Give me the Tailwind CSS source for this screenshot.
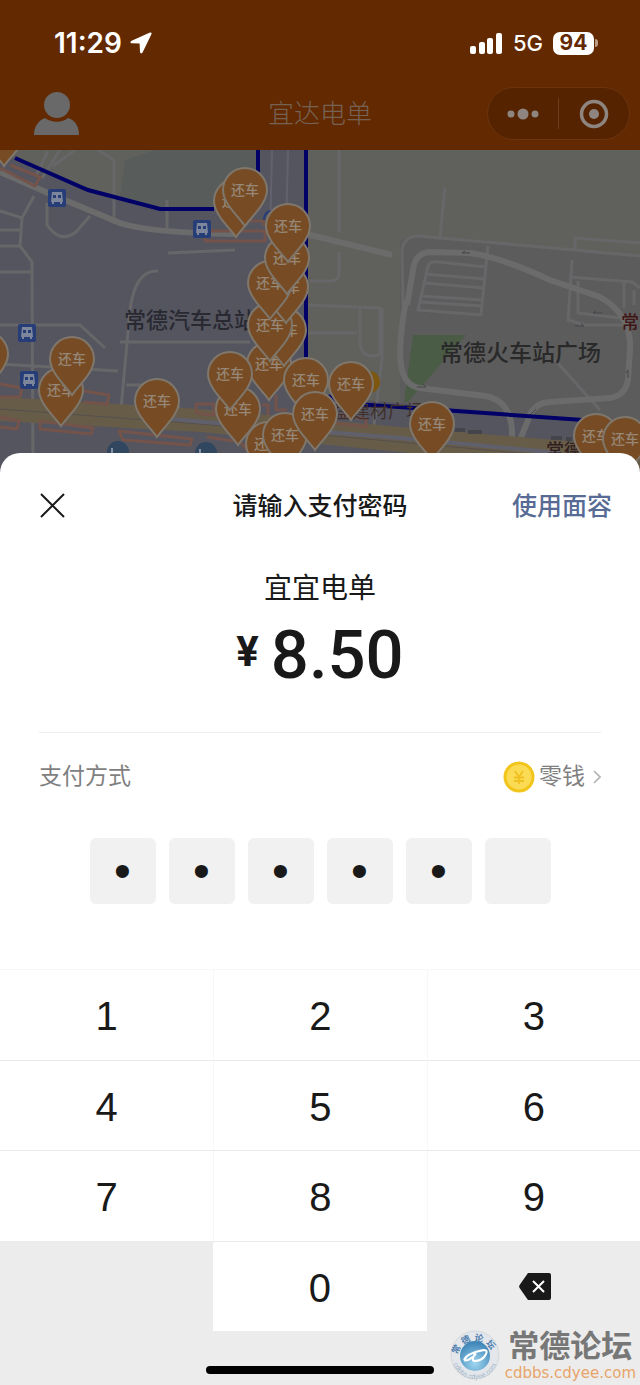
<!DOCTYPE html>
<html lang="zh-CN">
<head>
  <meta charset="UTF-8" />
  <meta name="viewport" content="width=device-width, initial-scale=1.0" />
  <title>请输入支付密码</title>
  <script src="https://cdn.jsdelivr.net/npm/@tailwindcss/browser@4"></script>
</head>
<body class="bg-[#ececec] font-['Liberation_Sans','Noto_Sans_CJK_SC',sans-serif] text-[#191919]">
  <div class="relative flex flex-col min-h-screen overflow-hidden">

    <!-- Dimmed mini program header -->
    <header class="bg-[#632900]">
      <div class="flex items-center justify-between h-[86px] pl-[54px] pr-[42px] text-white font-['Inter',sans-serif]">
        <div class="flex items-center gap-2">
          <span class="text-[28px] font-semibold">11:29</span>
          <svg class="w-[22px] h-[22px]" viewBox="0 0 22 22" fill="#fff"><path d="M20 0.6 1.6 8.8C-0.2 9.7 0.2 11.2 1.8 11.3L9.6 11.6 10 19.8C10.1 21.6 11.9 22 12.7 20.3L21.4 2.2C22 0.9 21.2 0.1 20 0.6Z"/></svg>
        </div>
        <div class="flex items-center gap-[10px]">
          <svg class="w-[33px] h-[21px]" viewBox="0 0 33 21" fill="#fff">
            <rect x="0" y="13" width="6" height="8" rx="2"/>
            <rect x="9" y="9" width="6" height="12" rx="2"/>
            <rect x="17" y="5" width="6" height="16" rx="2"/>
            <rect x="26" y="0" width="6" height="21" rx="2"/>
          </svg>
          <span class="text-[22px] font-medium">5G</span>
          <div class="flex items-center gap-px">
            <span class="flex items-center justify-center w-[41px] h-[23px] rounded-[7px] bg-white text-[#632900] text-[21px] font-bold">94</span>
            <span class="w-[3px] h-[8px] rounded-r-full bg-[#b79c88]"></span>
          </div>
        </div>
      </div>
      <div class="grid grid-cols-3 items-start h-16 pl-[34px] pr-[10px]">
        <button aria-label="我的" class="w-[46px] pt-[6px]">
          <svg class="w-[46px] h-[43px]" viewBox="0 0 46 43" fill="#696969"><circle cx="23" cy="13" r="13"/><path d="M0 43C0 34 5 28 11 26 18 31 28 31 34 26 41 28 45 34 45 43Z"/></svg>
        </button>
        <h1 class="pr-6 pt-2 text-[26px] leading-[40px] text-center font-light text-[#766255] whitespace-nowrap">宜达电单</h1>
        <div class="justify-self-end flex items-center w-[143px] h-[53px] mt-px rounded-full border border-[#6c3510] bg-[#552300]">
          <button aria-label="更多" class="flex-1 flex justify-center">
            <svg class="w-8 h-3" viewBox="0 0 32 12" fill="#8f8580"><circle cx="4" cy="6" r="3.5"/><circle cx="16" cy="6" r="5.5"/><circle cx="28" cy="6" r="3.5"/></svg>
          </button>
          <span class="w-px h-[31px] bg-[#6c3c1c]"></span>
          <button aria-label="关闭小程序" class="flex-1 flex justify-center">
            <svg class="w-[30px] h-[30px]" viewBox="0 0 30 30"><circle cx="15" cy="15" r="12.5" fill="none" stroke="#8f8580" stroke-width="3.5"/><circle cx="15" cy="15" r="5" fill="#8f8580"/></svg>
          </button>
        </div>
      </div>
    </header>

    <!-- Map behind the sheet, y runs on from the header -->
    <svg class="block w-full h-[323px] shrink-0" viewBox="0 150 640 323" preserveAspectRatio="xMidYMin slice" role="img" aria-label="还车点地图">
      <defs>
        <g id="pin">
          <path d="M0 36C-5 28-22 14-22 0A22 22 0 0 1 22 0C22 14 5 28 0 36Z" fill="#774c24" stroke="#7f776c" stroke-width="2"/>
          <text y="5" text-anchor="middle" font-size="14" font-weight="500" fill="#968777">还车</text>
        </g>
        <g id="bus">
          <rect x="-9" y="-9" width="18" height="18" rx="2" fill="#273d78"/>
          <path d="M-5-6H5L6 4H-6Z" fill="#7e869c"/>
          <path d="M-4-3H-1V0H-4ZM1-3H4V0H1Z" fill="#273d78"/>
          <path d="M-4 4V6M4 4V6" stroke="#7e869c" stroke-width="2"/>
        </g>
      </defs>
      <rect y="150" width="640" height="330" fill="#60605c"/>
      <path d="M155 150H258V209H160L120 196 125 160Z" fill="#585d5c"/>
      <path d="M400 480V245Q402 236 415 236L640 256V480Z" fill="#5c5c5c"/>
      <path d="M0 150 15 158 88 190 160 209H258V150H306V395L640 424V480H0Z" fill="#555560"/>
      <path d="M413 335H466L408 402H404Z" fill="#4a5c45"/>

      <!-- Minor roads -->
      <g fill="none" stroke="#676769" stroke-width="3">
        <path d="M98 150 114 160V224M48 151 36 176M60 150 42 178M34 196 22 218 0 211M22 218 20 246 32 262 33 480M0 230H20M0 246H20M0 272H32M47 203V225Q60 244 76 232L90 216M167 200V230M168 253 235 250M158 271Q135 270 130 310L120 420M0 325H80L105 348M0 364 118 371M120 342H250M126 385H165L180 410M75 150 53 166"/>
        <path d="M339 150V232M339 252V275Q338 281 330 281H310M445 187 440 238M308 305 380 308V355Q360 360 360 340V308M308 333H357M382 308V358L374 425"/>
        <path d="M403 305 402 250Q404 236 418 236L640 256M575 252V238L640 243M488 246 481 315 418 310 428 266Q430 261 438 262L486 267M425 274 484 279M425 283 484 288M421 296 483 300M420 302 482 306M572 260 568 320 585 325H626M570 277 632 282 640 288M578 281V313L620 318M624 283V308M634 290V305M555 360 600 410"/>
      </g>
      <g fill="none" stroke="#6b6b6b" stroke-width="6">
        <path d="M0 172 55 196 120 223Q150 233 235 234"/>
        <path d="M306 234 392 255"/>
        <path d="M407 305 413 270Q415 253 430 252L470 253Q500 257 550 280L600 297Q632 315 630 350L628 380Q625 396 610 398L550 402Q535 403 530 415L516 450"/>
        <path d="M406 300Q397 350 402 370 406 386 420 388L485 396Q510 400 512 430V450"/>
      </g>
      <path d="M272 150 270 236M288 150 286 236" stroke="#62616d" stroke-width="2"/>
      <g stroke="#47474a" stroke-width="1" fill="none">
        <path d="M462 253H470M462 253 465 251M417 387H426L423 384M593 313H602M593 313 596 311M575 326H584L581 323M628 370V378M628 370 626 373M530 415 536 409"/>
      </g>

      <!-- Railway road -->
      <path d="M0 397 200 409 400 427 640 447V480L430 455 200 432 0 421Z" fill="#675c48"/>
      <path d="M0 409 200 424 400 442 640 464" fill="none" stroke="#56504e" stroke-width="1"/>
      <path d="M160 418 250 426 400 438 560 453" fill="none" stroke="#60606d" stroke-width="4"/>
      <g fill="none" stroke="#73534a" stroke-width="3" stroke-linejoin="round">
        <path d="M0 168 35 186 40 177 10 165M0 384 22 388 20 397H0M84 391 109 395 107 404 84 402M0 417 19 421 17 429 0 427M40 421 93 428 91 434 40 429ZM119 431 192 439 190 445 123 440ZM196 404H214V415L196 413ZM205 231H265V241H205ZM222 221H264V226M262 405H268V415M276 395V410H287M340 415 366 419V427L335 423M207 437 240 442 248 451"/>
      </g>
      <g fill="#44444b">
        <path d="M455 428H465V432H455ZM468 430H482V434H468ZM551 436H562V440H551ZM566 437H572V441H566Z"/>
      </g>
      <circle cx="118" cy="452" r="11" fill="#31465f"/><path d="M112 448V457M113 454H125V458" fill="none" stroke="#8591a0" stroke-width="2"/>
      <circle cx="206" cy="453" r="11" fill="#31465f"/><path d="M200 449V458M201 455H213V459" fill="none" stroke="#8591a0" stroke-width="2"/>
      <circle cx="369" cy="382" r="11" fill="#7d5710"/>

      <!-- Service area border -->
      <g fill="none" stroke="#000066" stroke-width="4">
        <path d="M15 158 88 190 160 209H214M258 150V172M306 150V358M328 396 342 403 640 424"/>
      </g>
      <path d="M264 220Q264 212 271 211" fill="none" stroke="#273d78" stroke-width="2"/>
      <use href="#bus" x="57" y="198"/><use href="#bus" x="202" y="229"/>
      <use href="#bus" x="27" y="333"/><use href="#bus" x="29" y="380"/>

      <g class="font-['Noto_Sans_CJK_SC',sans-serif]" font-weight="500">
        <text x="124" y="328" font-size="22" fill="#292932">常德汽车总站</text>
        <text x="440" y="361" font-size="23" fill="#292929">常德火车站广场</text>
        <text x="334" y="418" font-size="18" font-weight="400" fill="#40302b">盛建材广场</text>
        <text x="621" y="329" font-size="18" fill="#401616">常</text>
        <text x="546" y="457" font-size="18" fill="#302020">常德</text>
        <use href="#pin" x="4" y="130"/>
        <use href="#pin" x="236" y="201"/><use href="#pin" x="245" y="190"/>
        <use href="#pin" x="-14" y="354"/>
        <use href="#pin" x="61" y="390"/><use href="#pin" x="72" y="359"/>
        <use href="#pin" x="157" y="401"/>
        <use href="#pin" x="269" y="364"/>
        <use href="#pin" x="284" y="330"/><use href="#pin" x="270" y="325"/>
        <use href="#pin" x="286" y="287"/><use href="#pin" x="270" y="283"/>
        <use href="#pin" x="287" y="258"/><use href="#pin" x="288" y="226"/>
        <use href="#pin" x="238" y="409"/><use href="#pin" x="230" y="374"/>
        <use href="#pin" x="306" y="380"/><use href="#pin" x="351" y="384"/>
        <use href="#pin" x="268" y="444"/><use href="#pin" x="285" y="435"/>
        <use href="#pin" x="315" y="414"/>
        <use href="#pin" x="432" y="424"/>
        <use href="#pin" x="596" y="436"/><use href="#pin" x="625" y="439"/>
      </g>
    </svg>

    <!-- Payment sheet -->
    <main class="relative -mt-5 rounded-t-[20px] bg-white">
      <div class="grid grid-cols-[1fr_auto_1fr] items-center h-[104px] px-7">
        <button aria-label="关闭" class="justify-self-start pl-3">
          <svg class="w-[25px] h-[25px]" viewBox="0 0 25 25" fill="none" stroke="#191919" stroke-width="2"><path d="M1 1 24 24M24 1 1 24"/></svg>
        </button>
        <h2 class="pt-1 text-[25px] font-medium">请输入支付密码</h2>
        <button class="justify-self-end pt-1 text-[25px] font-medium text-[#576b95]">使用面容</button>
      </div>

      <div class="flex flex-col items-center h-[175px] pt-[10px]">
        <p class="text-[28px] leading-[44px]">宜宜电单</p>
        <p class="flex items-start gap-3 font-['Roboto',sans-serif] font-medium">
          <span class="pt-4 text-[42px] leading-[50px] font-bold">¥</span>
          <span class="text-[67px] leading-[88px]">8.50</span>
        </p>
      </div>

      <div class="mx-[39px] border-t border-[#ededed] flex items-center justify-between h-[86px] pt-[2px] text-[23px] text-[#7f7f7f]">
        <span>支付方式</span>
        <button class="flex items-center gap-1">
          <svg class="w-8 h-8" viewBox="0 0 32 32"><circle cx="16" cy="16" r="14" fill="#fadb53" stroke="#f2c51c" stroke-width="3"/><path d="M12 10 16 16 20 10M11 16.5H21M11 20H21M16 16V23" fill="none" stroke="#f0c020" stroke-width="1.8"/></svg>
          <span>零钱</span>
          <svg class="w-[8px] h-[14px] ml-1" viewBox="0 0 8 14" fill="none" stroke="#b2b2b2" stroke-width="1.6"><path d="M1 1 7 7 1 13"/></svg>
        </button>
      </div>

      <div class="flex justify-center gap-[13px] pt-5 pb-[65px]">
        <input type="password" maxlength="1" value="1" aria-label="第1位" class="w-[66px] h-[66px] rounded-md bg-[#f1f1f1] text-center text-[48px]" />
        <input type="password" maxlength="1" value="1" aria-label="第2位" class="w-[66px] h-[66px] rounded-md bg-[#f1f1f1] text-center text-[48px]" />
        <input type="password" maxlength="1" value="1" aria-label="第3位" class="w-[66px] h-[66px] rounded-md bg-[#f1f1f1] text-center text-[48px]" />
        <input type="password" maxlength="1" value="1" aria-label="第4位" class="w-[66px] h-[66px] rounded-md bg-[#f1f1f1] text-center text-[48px]" />
        <input type="password" maxlength="1" value="1" aria-label="第5位" class="w-[66px] h-[66px] rounded-md bg-[#f1f1f1] text-center text-[48px]" />
        <input type="password" maxlength="1" value="" aria-label="第6位" class="w-[66px] h-[66px] rounded-md bg-[#f1f1f1] text-center text-[48px]" />
      </div>

      <!-- Number pad -->
      <div class="grid grid-cols-3 grid-rows-4 h-[362px] text-[40px]">
        <button class="pt-[3px] border-t border-[#f7f7f7]">1</button>
        <button class="pt-[3px] border-t border-l border-[#f7f7f7]">2</button>
        <button class="pt-[3px] border-t border-l border-[#f7f7f7]">3</button>
        <button class="pt-[3px] border-t border-[#e9e9e9]">4</button>
        <button class="pt-[3px] border-t border-l border-t-[#e9e9e9] border-l-[#f7f7f7]">5</button>
        <button class="pt-[3px] border-t border-l border-t-[#e9e9e9] border-l-[#f7f7f7]">6</button>
        <button class="pt-[3px] border-t border-[#e9e9e9]">7</button>
        <button class="pt-[3px] border-t border-l border-t-[#e9e9e9] border-l-[#f7f7f7]">8</button>
        <button class="pt-[3px] border-t border-l border-t-[#e9e9e9] border-l-[#f7f7f7]">9</button>
        <span class="bg-[#ececec]"></span>
        <button class="pt-[3px] border-t border-[#e9e9e9]">0</button>
        <button aria-label="删除" class="flex items-center justify-center pl-[3px] pt-[2px] bg-[#ececec]">
          <svg class="w-8 h-[27px]" viewBox="0 0 32 27"><path d="M9 0H30Q32 0 32 2V25Q32 27 30 27H9L0.6 15Q-0.3 13.5 0.6 12Z" fill="#191919"/><path d="M14 8 25 19M25 8 14 19" stroke="#fff" stroke-width="2"/></svg>
        </button>
      </div>
    </main>

    <div class="flex justify-center h-[54px] pt-[35px] bg-[#ececec]">
      <span class="w-[228px] h-2 rounded-full bg-black"></span>
    </div>

    <!-- Forum watermark -->
    <div class="absolute right-1 bottom-1 flex items-start gap-1">
      <svg class="w-[52px] h-[52px]" viewBox="0 0 52 52">
        <defs>
          <radialGradient id="ball" cx="0.5" cy="0.75" r="0.7"><stop offset="0" stop-color="#9fd6f0"/><stop offset="1" stop-color="#3f86b8"/></radialGradient>
          <path id="arcTop" d="M8 30A18 18 0 0 1 44 30"/>
          <path id="arcBottom" d="M3 27A23 23 0 0 0 49 27"/>
        </defs>
        <circle cx="26" cy="26" r="24" fill="#e3e7eb" stroke="#d4d8dc"/>
        <circle cx="26" cy="27" r="15" fill="url(#ball)"/>
        <path d="M15 31Q18 24 35 21 39 21 37 25 34 32 25 32 22 31 27 23M15 31Q19 33 27 25" fill="none" stroke="#fff" stroke-width="2"/>
        <text font-size="9" font-weight="700" fill="#4f7fb0"><textPath href="#arcTop" startOffset="4">常 德 论 坛</textPath></text>
        <text font-size="7" fill="#a3b6c8"><textPath href="#arcBottom" startOffset="8">cdbbs.cdyee.com</textPath></text>
      </svg>
      <div class="flex flex-col items-center">
        <span class="text-[31px] leading-[36px] font-bold text-[#777777]">常德论坛</span>
        <a href="#" class="font-['DejaVu_Sans',sans-serif] text-[15px] leading-4 text-[#e8a468]">cdbbs.cdyee.com</a>
      </div>
    </div>
  </div>
</body>
</html>
